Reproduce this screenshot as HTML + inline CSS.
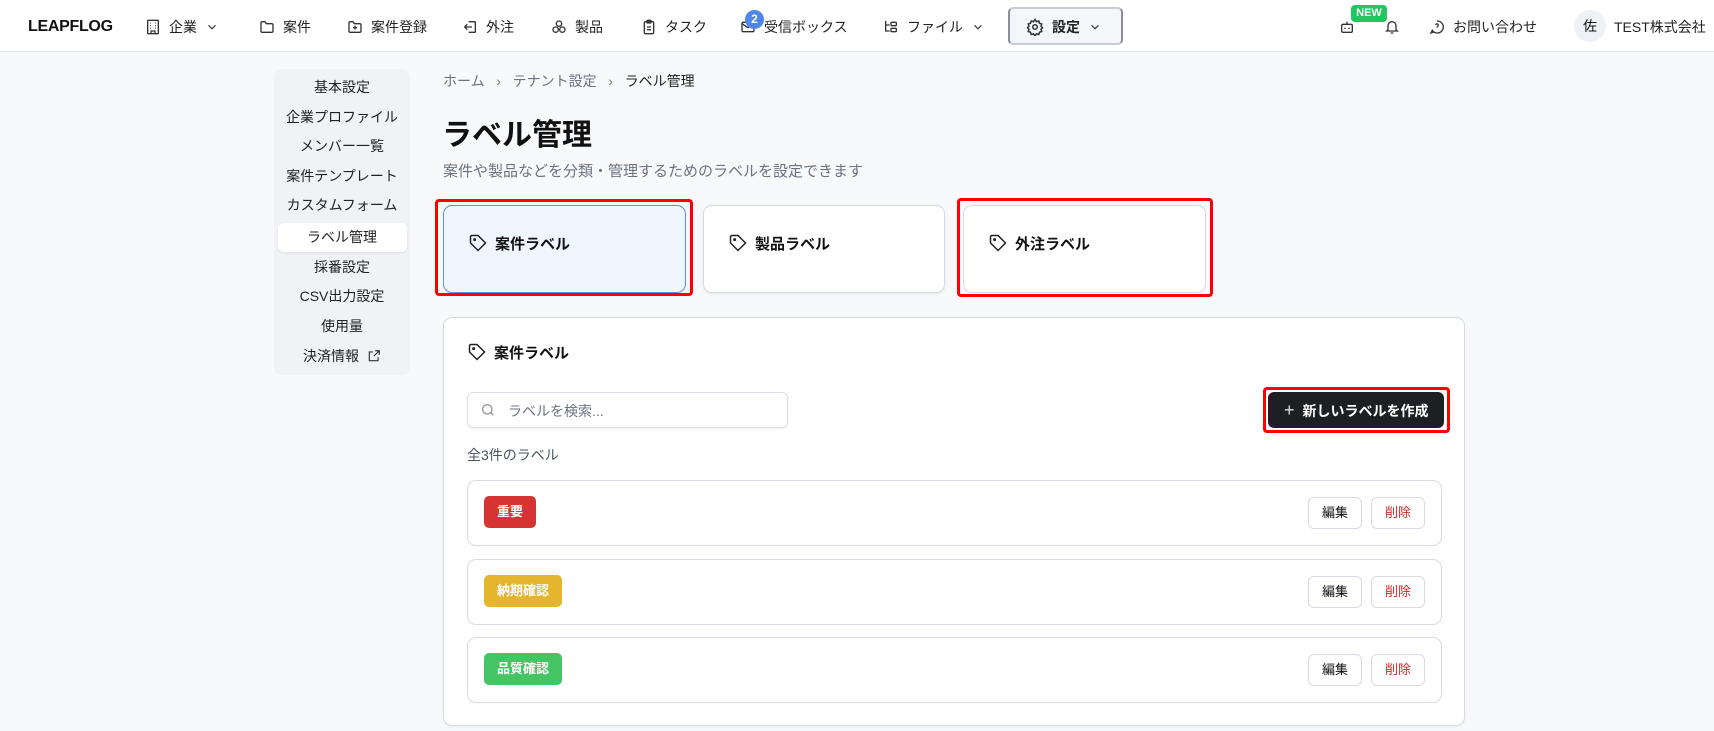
<!DOCTYPE html>
<html><head><meta charset="utf-8"><style>
*{box-sizing:border-box;margin:0;padding:0}
body{width:1714px;height:731px;overflow:hidden;background:#f8f9fb;font-family:"Liberation Sans","Noto Sans CJK JP",sans-serif;color:#111;position:relative}
.a{position:absolute}
.hdr{left:0;top:0;width:1714px;height:52px;background:#fff;border-bottom:1px solid #dfe3ea}
.ni{position:absolute;top:17px;font-size:14px;display:flex;align-items:center;gap:8px;color:#222;height:20px}
svg{display:block}
.side{left:274px;top:69px;width:136px;height:306px;background:#f0f2f5;border-radius:8px}
.si{position:absolute;left:0;width:136px;text-align:center;font-size:14px;color:#222;line-height:20px}
.card{background:#fff;border:1px solid #d7dbe2;border-radius:9px}
.red{border:3px solid #f00;border-radius:4px}
.tab{display:flex;align-items:center;gap:8px;padding-left:25px;padding-bottom:12px;font-size:15px;font-weight:bold}
.btn{position:absolute;width:54px;height:32px;border:1px solid #d7dbe2;border-radius:6px;background:#fff;font-size:13px;text-align:center;line-height:30px}
.badge{position:absolute;left:16px;top:15px;height:32px;border-radius:5px;color:#fff;font-size:13px;font-weight:bold;line-height:32px;padding:0 13px}
</style></head><body>
<div class="a hdr"></div>
<div class="a" style="left:28px;top:18px;font-size:16px;font-weight:bold;letter-spacing:-0.3px">LEAPFLOG</div>
<div class="ni" style="left:145px"><svg width="16" height="16" viewBox="0 0 24 24" fill="none" stroke="#333" stroke-width="2"><rect x="4" y="2" width="16" height="20" rx="1"/><path d="M9 22v-4h6v4M8 6h1M15 6h1M8 10h1M15 10h1M8 14h1M15 14h1"/></svg>企業<svg width="14" height="14" viewBox="0 0 24 24" fill="none" stroke="#333" stroke-width="2"><path d="M6 9l6 6 6-6"/></svg></div>
<div class="ni" style="left:259px"><svg width="16" height="16" viewBox="0 0 24 24" fill="none" stroke="#333" stroke-width="2"><path d="M3 6a2 2 0 0 1 2-2h4l2 3h8a2 2 0 0 1 2 2v9a2 2 0 0 1-2 2H5a2 2 0 0 1-2-2z"/></svg>案件</div>
<div class="ni" style="left:347px"><svg width="16" height="16" viewBox="0 0 24 24" fill="none" stroke="#333" stroke-width="2"><path d="M3 6a2 2 0 0 1 2-2h4l2 3h8a2 2 0 0 1 2 2v9a2 2 0 0 1-2 2H5a2 2 0 0 1-2-2zM12 10v6M9 13h6"/></svg>案件登録</div>
<div class="ni" style="left:462px"><svg width="16" height="16" viewBox="0 0 24 24" fill="none" stroke="#333" stroke-width="2"><path d="M10 4h9a1 1 0 0 1 1 1v14a1 1 0 0 1-1 1h-9M4 12h11M8 8l-4 4 4 4"/></svg>外注</div>
<div class="ni" style="left:551px"><svg width="16" height="16" viewBox="0 0 24 24" fill="none" stroke="#333" stroke-width="2"><circle cx="12" cy="7" r="4"/><circle cx="7" cy="16" r="4"/><circle cx="17" cy="16" r="4"/></svg>製品</div>
<div class="ni" style="left:641px"><svg width="16" height="16" viewBox="0 0 24 24" fill="none" stroke="#333" stroke-width="2"><rect x="5" y="4" width="14" height="18" rx="2"/><rect x="9" y="2" width="6" height="4" rx="1"/><path d="M9 12h6M9 16h6"/></svg>タスク</div>
<div class="ni" style="left:740px"><svg width="16" height="16" viewBox="0 0 24 24" fill="none" stroke="#333" stroke-width="2"><rect x="3" y="5" width="18" height="14" rx="2"/><path d="M3 7l9 6 9-6"/></svg>受信ボックス</div>
<div class="a" style="left:745px;top:10px;width:19px;height:19px;border-radius:50%;background:#4f86e8;color:#fff;font-size:12px;font-weight:bold;text-align:center;line-height:19px">2</div>
<div class="ni" style="left:883px"><svg width="16" height="16" viewBox="0 0 24 24" fill="none" stroke="#333" stroke-width="2"><path d="M4 3v15h6M4 9h6"/><rect x="12" y="5" width="8" height="5" rx="1"/><rect x="12" y="14" width="8" height="5" rx="1"/></svg>ファイル<svg width="14" height="14" viewBox="0 0 24 24" fill="none" stroke="#333" stroke-width="2"><path d="M6 9l6 6 6-6"/></svg></div>
<div class="a" style="left:1008px;top:7px;width:115px;height:38px;border:2px solid #8a8f99;border-top-color:#c8ccd3;border-bottom-color:#c8ccd3;border-radius:5px;background:#f4f6f9"></div>
<div class="ni" style="left:1026px;font-weight:bold"><svg width="18" height="18" viewBox="0 0 24 24" fill="none" stroke="#333" stroke-width="2"><circle cx="12" cy="12" r="3"/><path d="M12 2l2 3 3-1 1 3 3 1-1 3 2 2-2 2 1 3-3 1-1 3-3-1-2 3-2-3-3 1-1-3-3-1 1-3-2-2 2-2-1-3 3-1 1-3 3 1z"/></svg>設定<svg width="14" height="14" viewBox="0 0 24 24" fill="none" stroke="#333" stroke-width="2"><path d="M6 9l6 6 6-6"/></svg></div>
<svg class="a" style="left:1339px;top:19px" width="16" height="16" viewBox="0 0 24 24" fill="none" stroke="#333" stroke-width="2"><rect x="4" y="8" width="16" height="12" rx="2"/><path d="M12 8V4M9 13v2M15 13v2"/></svg>
<div class="a" style="left:1351px;top:5px;width:36px;height:17px;background:#22c55e;border-radius:4px;color:#fff;font-size:11px;font-weight:bold;text-align:center;line-height:17px">NEW</div>
<svg class="a" style="left:1384px;top:19px" width="16" height="16" viewBox="0 0 24 24" fill="none" stroke="#333" stroke-width="2"><path d="M6 16V10a6 6 0 0 1 12 0v6l2 2H4zM10 21h4"/></svg>
<div class="ni" style="left:1429px"><svg width="16" height="16" viewBox="0 0 24 24" fill="none" stroke="#333" stroke-width="2"><path d="M12 3a9 9 0 1 1-7 14l-2 4 5-2"/><path d="M10 9a2 2 0 1 1 3 2c-1 .5-1 1-1 2M12 17h.01"/></svg>お問い合わせ</div>
<div class="a" style="left:1574px;top:10px;width:32px;height:32px;border-radius:50%;background:#eef1f6;font-size:14px;text-align:center;line-height:32px">佐</div>
<div class="ni" style="left:1614px">TEST株式会社</div>

<div class="a side">
<div class="si" style="top:8px">基本設定</div>
<div class="si" style="top:38px">企業プロファイル</div>
<div class="si" style="top:67px">メンバー一覧</div>
<div class="si" style="top:97px">案件テンプレート</div>
<div class="si" style="top:126px">カスタムフォーム</div>
<div class="a" style="left:4px;top:154px;width:129px;height:29px;background:#fff;border-radius:6px;box-shadow:0 1px 2px rgba(0,0,0,.08)"></div>
<div class="si" style="top:158px">ラベル管理</div>
<div class="si" style="top:188px">採番設定</div>
<div class="si" style="top:217px">CSV出力設定</div>
<div class="si" style="top:247px">使用量</div>
<div class="si" style="top:277px">決済情報 <svg style="display:inline-block;vertical-align:-2px;margin-left:4px" width="14" height="14" viewBox="0 0 24 24" fill="none" stroke="#333" stroke-width="2"><path d="M14 3h7v7M21 3l-9 9M19 14v6H4V5h6"/></svg></div>
</div>

<div class="a" style="left:443px;top:71px;font-size:14px;color:#6b7280">ホーム&nbsp;&nbsp;&nbsp;›&nbsp;&nbsp;&nbsp;テナント設定&nbsp;&nbsp;&nbsp;›&nbsp;&nbsp;&nbsp;<span style="color:#222">ラベル管理</span></div>
<div class="a" style="left:442px;top:110px;font-size:30px;font-weight:bold">ラベル管理</div>
<div class="a" style="left:443px;top:160px;font-size:15px;color:#6b7280">案件や製品などを分類・管理するためのラベルを設定できます</div>

<div class="a red" style="left:435px;top:199px;width:258px;height:97px"></div>
<div class="a card tab" style="left:443px;top:205px;width:243px;height:88px;background:#eff6ff;border-color:#5b8ff0"><svg width="18" height="18" viewBox="0 0 24 24" fill="none" stroke="#222" stroke-width="2"><path d="M12 2H4a2 2 0 0 0-2 2v8l10 10 10-10z"/><circle cx="7.5" cy="7.5" r="1"/></svg>案件ラベル</div>
<div class="a card tab" style="left:703px;top:205px;width:242px;height:88px;box-shadow:0 1px 3px rgba(0,0,0,.08)"><svg width="18" height="18" viewBox="0 0 24 24" fill="none" stroke="#222" stroke-width="2"><path d="M12 2H4a2 2 0 0 0-2 2v8l10 10 10-10z"/><circle cx="7.5" cy="7.5" r="1"/></svg>製品ラベル</div>
<div class="a red" style="left:957px;top:198px;width:256px;height:99px"></div>
<div class="a card tab" style="left:963px;top:205px;width:243px;height:88px"><svg width="18" height="18" viewBox="0 0 24 24" fill="none" stroke="#222" stroke-width="2"><path d="M12 2H4a2 2 0 0 0-2 2v8l10 10 10-10z"/><circle cx="7.5" cy="7.5" r="1"/></svg>外注ラベル</div>

<div class="a card" style="left:443px;top:317px;width:1022px;height:409px;box-shadow:0 1px 3px rgba(0,0,0,.06)">
<div class="a tab" style="left:0;top:22px;height:24px;padding-bottom:0;padding-left:24px">
<svg width="18" height="18" viewBox="0 0 24 24" fill="none" stroke="#222" stroke-width="2"><path d="M12 2H4a2 2 0 0 0-2 2v8l10 10 10-10z"/><circle cx="7.5" cy="7.5" r="1"/></svg>案件ラベル</div>
<div class="a" style="left:23px;top:74px;width:321px;height:36px;border:1px solid #dcdfe6;border-radius:6px;background:#fff;box-shadow:0 1px 2px rgba(0,0,0,.05)"></div>
<svg class="a" style="left:36px;top:84px" width="16" height="16" viewBox="0 0 24 24" fill="none" stroke="#999" stroke-width="2"><circle cx="11" cy="11" r="7"/><path d="M20 20l-4-4"/></svg>
<div class="a" style="left:64px;top:83px;font-size:14px;color:#6b7280">ラベルを検索...</div>
<div class="a" style="left:23px;top:127px;font-size:14px;color:#4b5563">全3件のラベル</div>
<div class="a red" style="left:819px;top:69px;width:187px;height:46px"></div>
<div class="a" style="left:824px;top:74px;width:176px;height:36px;background:#1d2022;border-radius:6px;color:#fff;font-size:14px;font-weight:bold;line-height:36px;padding-left:16px"><span style="font-weight:normal;font-size:18px;margin-right:8px;color:#ddd">+</span>新しいラベルを作成</div>

<div class="a card" style="left:23px;top:162px;width:975px;height:66px"><div class="badge" style="background:#d63333">重要</div><div class="btn" style="left:840px;top:16px">編集</div><div class="btn" style="left:903px;top:16px;color:#dc2626">削除</div></div>
<div class="a card" style="left:23px;top:241px;width:975px;height:66px"><div class="badge" style="background:#e5b52d">納期確認</div><div class="btn" style="left:840px;top:16px">編集</div><div class="btn" style="left:903px;top:16px;color:#dc2626">削除</div></div>
<div class="a card" style="left:23px;top:319px;width:975px;height:66px"><div class="badge" style="background:#44c463">品質確認</div><div class="btn" style="left:840px;top:16px">編集</div><div class="btn" style="left:903px;top:16px;color:#dc2626">削除</div></div>
</div>
</body></html>
